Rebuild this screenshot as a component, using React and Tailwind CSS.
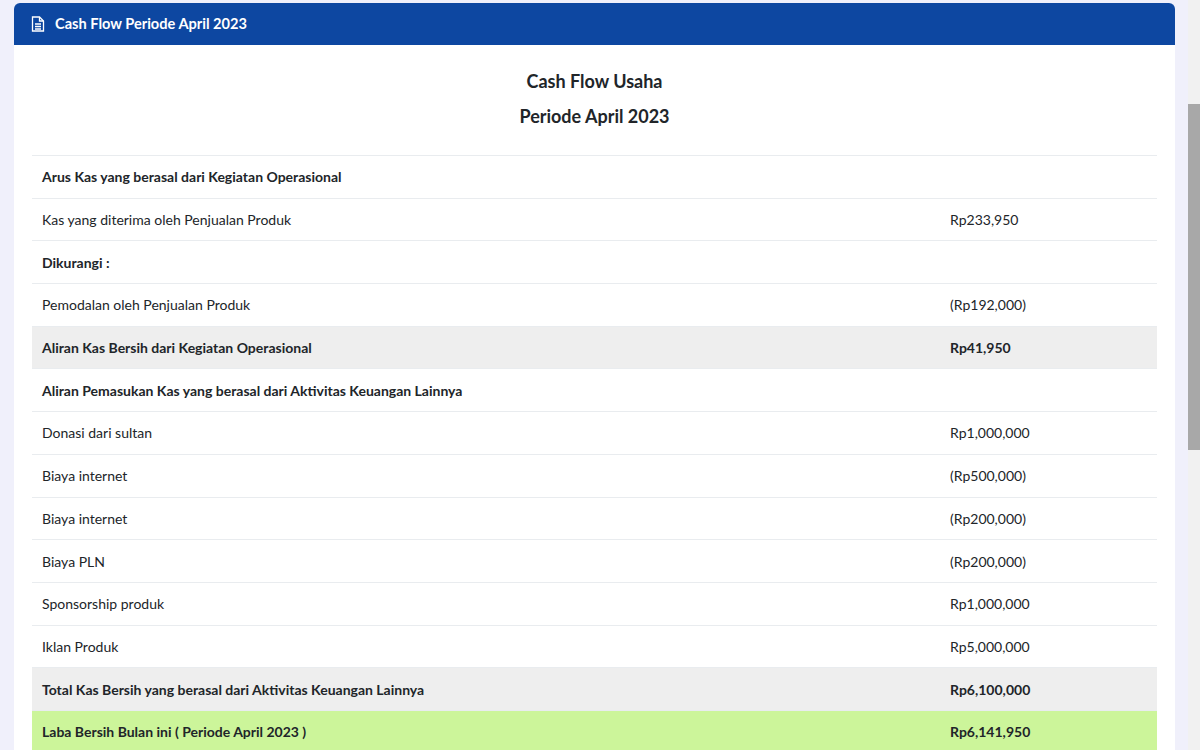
import React from "react";

const rows = [
  ["Arus Kas yang berasal dari Kegiatan Operasional", "", "b"],
  ["Kas yang diterima oleh Penjualan Produk", "Rp233,950", ""],
  ["Dikurangi :", "", "b"],
  ["Pemodalan oleh Penjualan Produk", "(Rp192,000)", ""],
  ["Aliran Kas Bersih dari Kegiatan Operasional", "Rp41,950", "g"],
  ["Aliran Pemasukan Kas yang berasal dari Aktivitas Keuangan Lainnya", "", "b"],
  ["Donasi dari sultan", "Rp1,000,000", ""],
  ["Biaya internet", "(Rp500,000)", ""],
  ["Biaya internet", "(Rp200,000)", ""],
  ["Biaya PLN", "(Rp200,000)", ""],
  ["Sponsorship produk", "Rp1,000,000", ""],
  ["Iklan Produk", "Rp5,000,000", ""],
  ["Total Kas Bersih yang berasal dari Aktivitas Keuangan Lainnya", "Rp6,100,000", "g"],
  ["Laba Bersih Bulan ini ( Periode April 2023 )", "Rp6,141,950", "l"],
];

export default function App() {
  return (
    <div className="flex h-[750px] overflow-hidden bg-[#f0f0fb] text-[#212529]" style={{ fontFamily: "Lato, 'Noto Sans', sans-serif" }}>
      <div className="flex-1 pt-[3px] pl-[14px] pr-[13px]">
        <div className="bg-white rounded-t-[6px] pb-10">
          <div className="h-[42px] bg-[#0d47a1] rounded-t-[6px] flex items-center px-[17px] gap-[10px] text-white">
            <svg width="14" height="16" viewBox="0 0 14 16" fill="none" stroke="white" strokeWidth="1.3">
              <path d="M1.5 1h7l4 4v10h-11z" />
              <path d="M8.5 1v4h4" />
              <path d="M4 8h6M4 10.5h6M4 13h6" />
            </svg>
            <span className="font-bold text-[14.6px]">Cash Flow Periode April 2023</span>
          </div>
          <div className="px-[18px]">
            <div className="text-center font-bold text-[18px] pt-[23px] leading-[27px]">Cash Flow Usaha</div>
            <div className="text-center font-bold text-[18px] pt-[8px] leading-[27px] pb-[25px]">Periode April 2023</div>
            <div className="border-t border-[#e9ecef]">
              {rows.map(([a, b, t], i) => (
                <div key={i} className={`flex h-[42.7px] items-center border-b border-[#e9ecef] text-[14px] ${t === "g" ? "bg-[#eeeeee]" : t === "l" ? "bg-[#ccf59a]" : ""} ${t ? "font-bold" : ""}`}>
                  <div className="w-[918px] pl-[10px]">{a}</div>
                  <div>{b}</div>
                </div>
              ))}
            </div>
          </div>
        </div>
      </div>
      <div className="w-[12px] bg-[#f1f1f1] flex flex-col">
        <div className="h-[104px]" />
        <div className="h-[346px] bg-[#a8a8a8]" />
      </div>
    </div>
  );
}
